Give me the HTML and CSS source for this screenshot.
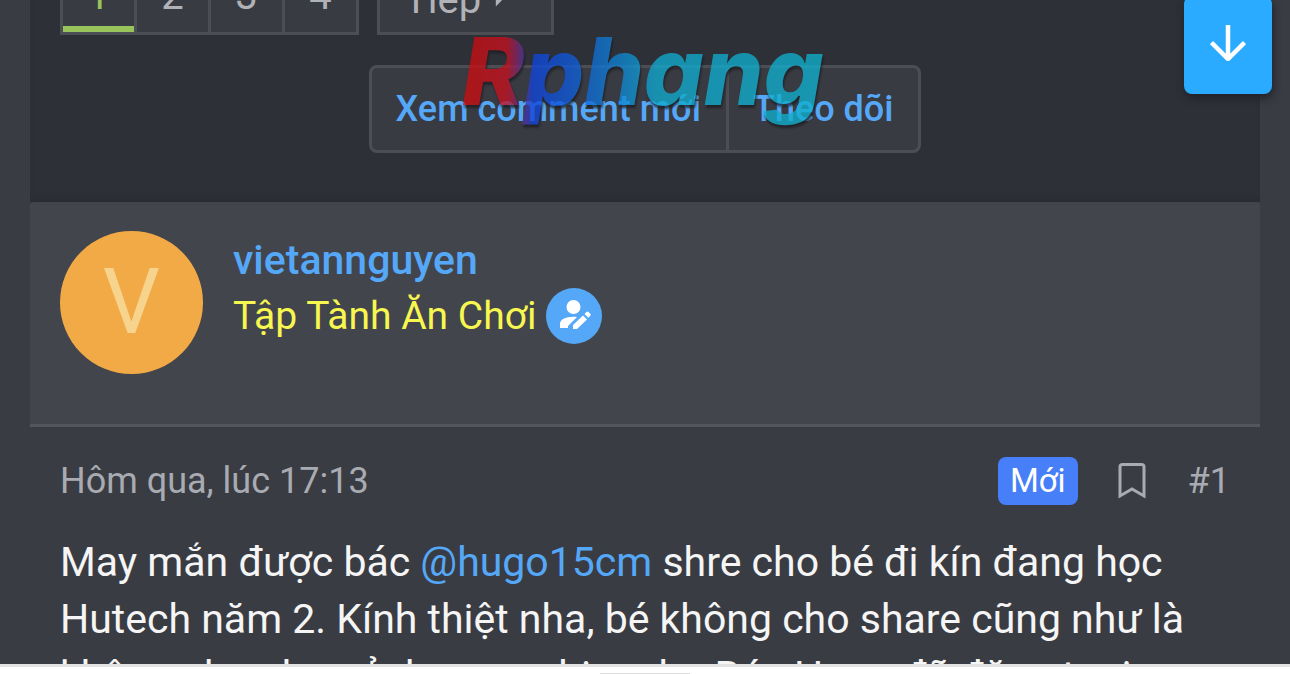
FILE: index.html
```html
<!DOCTYPE html>
<html lang="vi">
<head>
<meta charset="utf-8">
<meta name="viewport" content="width=device-width, initial-scale=1">
<title>Rphang</title>
<link rel="stylesheet" href="styles.css">
</head>
<body>
<div class="screen">
  <main class="forum">
    <header class="toolbar">
      <nav class="pager" aria-label="Trang">
        <div class="pages">
          <a class="page page-current" href="#p1" aria-current="page">1</a>
          <a class="page" href="#p2">2</a>
          <a class="page" href="#p3">3</a>
          <a class="page" href="#p4">4</a>
        </div>
        <a class="next" href="#p2">Tiếp <svg class="caret" viewBox="0 0 10 16" aria-hidden="true"><path d="M1 0 9 8 1 16Z"/></svg></a>
      </nav>
      <div class="actions">
        <a class="action" href="#new">Xem comment mới</a>
        <a class="action" href="#watch">Theo dõi</a>
        <svg class="brand" viewBox="0 0 376 110" role="img" aria-label="Rphang">
          <defs>
            <linearGradient id="ink" gradientUnits="userSpaceOnUse" x1="0" y1="0" x2="376" y2="0">
              <stop offset="0" stop-color="#cc0c0c"/>
              <stop offset=".12" stop-color="#c41220"/>
              <stop offset=".19" stop-color="#0f45dc"/>
              <stop offset=".28" stop-color="#1058d8"/>
              <stop offset=".42" stop-color="#1084d2"/>
              <stop offset=".52" stop-color="#10aace"/>
              <stop offset="1" stop-color="#10b0ce"/>
            </linearGradient>
          </defs>
          <text class="brand-text" x="0" y="73" fill="url(#ink)">Rphang</text>
        </svg>
      </div>
    </header>
    <article class="post">
      <section class="author">
        <a class="avatar" href="#user">V</a>
        <div class="identity">
          <a class="username" href="#user">vietannguyen</a>
          <div class="rank">
            <span>Tập Tành Ăn Chơi</span>
            <svg class="role" viewBox="0 0 56 56" role="img" aria-label="Người viết bài">
              <circle cx="28" cy="28" r="28" fill="#55a8f7"/>
              <circle cx="27.500" cy="19" r="7" fill="#fff"/>
              <path d="M14 40v-4c0-5 7-8 17-7l-9 9v2Z" fill="#fff"/>
              <path d="M27 41v-4l10-9.500 4 4L31 41ZM38.500 26l2-2q1-1 2 0l1.800 1.800q1 1 0 2l-2 2Z" fill="#fff"/>
            </svg>
          </div>
        </div>
      </section>
      <div class="meta">
        <time>Hôm qua, lúc 17:13</time>
        <div class="meta-tools">
          <span class="badge">Mới</span>
          <button class="bookmark" type="button" aria-label="Đánh dấu">
            <svg viewBox="0 0 28 36" aria-hidden="true"><path d="M2 33V4q0-2.500 2.500-2.500h19q2.500 0 2.500 2.500v29l-12-7Z" fill="none" stroke="#a9abb2" stroke-width="3"/></svg>
          </button>
          <a class="number" href="#post-1">#1</a>
        </div>
      </div>
      <p class="body">May mắn được bác <a class="mention" href="#hugo15cm">@hugo15cm</a> shre cho bé đi kín đang học<br>Hutech năm 2. Kính thiệt nha, bé không cho share cũng như là<br>không cho chụp ảnh xong chim cho Bác Hugo đã đăng topic</p>
    </article>
    <button class="jump" type="button" aria-label="Xuống cuối">
      <svg viewBox="0 0 36 36" aria-hidden="true"><path d="M18 0v33M1.500 17.500 18 34l16.500-16.500" fill="none" stroke="#fff" stroke-width="4.500"/></svg>
    </button>
  </main>
  <footer class="sheet"><span class="handle"></span></footer>
</div>
</body>
</html>
```
FILE: styles.css
```css
* { box-sizing: border-box; }
body { margin: 0; background: #fff; font-family: Roboto, "Noto Sans", sans-serif; }
a { color: inherit; text-decoration: none; }
.screen { display: flex; flex-direction: column; height: 100vh; }
.forum { position: relative; flex: 1; min-height: 0; overflow: hidden; padding: 0 30px; background: #3a3c43; }
.toolbar { height: 202px; background: #2d3037; box-shadow: inset 0 -6px 6px -4px #292b30; }
.pager { display: flex; gap: 18px; height: 35px; padding-left: 30px; align-items: flex-end; font-size: 40px; color: #b0b2b8; }
.pages { display: flex; border: 3px solid #4c4e54; background: #393b42; }
.page { display: flex; align-items: flex-end; justify-content: center; width: 74px; height: 64px; padding-bottom: 14px; border-right: 3px solid #4c4e54; line-height: 44px; }
.page:last-child { width: 71px; border-right: 0; }
.page-current { color: #99c45c; box-shadow: inset 0 -6px #99c45c; }
.next { display: flex; align-items: center; gap: 14px; height: 70px; padding: 0 48px 0 24px; border: 3px solid #4c4e54; background: #393b42; line-height: 44px; }
.caret { width: 8px; height: 14px; fill: currentColor; }
.actions { position: relative; display: flex; width: max-content; height: 88px; margin: 30px auto 0; border: 3px solid #4c4e54; border-radius: 8px; background: #393b42; color: #55a8f7; font-size: 36px; font-weight: 500; line-height: 82px; }
.action { padding: 0 25px 0 24px; }
.action + .action { border-left: 3px solid #4c4e54; }
.brand { position: absolute; left: 90px; top: -36px; width: 376px; height: 110px; overflow: visible; opacity: .78; pointer-events: none; filter: drop-shadow(1px 3px 1px #1b1d22); }
.brand-text { font: italic 800 94px Inter, sans-serif; }
.author { display: flex; gap: 30px; height: 225px; padding: 29px 30px; background: #43454d; border-bottom: 3px solid #54565d; border-radius: 4px 4px 0 0; }
.avatar { display: grid; place-items: center; flex: none; width: 143px; height: 143px; border-radius: 50%; background: #f2aa46; color: #f7d48d; font-size: 90px; font-weight: 400; line-height: 100px; }
.identity { padding-top: 1px; }
.username { display: block; color: #55a8f7; font-size: 41px; font-weight: 500; line-height: 56px; }
.rank { display: flex; align-items: center; gap: 10px; color: #f7f74f; font-size: 39px; line-height: 56px; }
.role { width: 56px; height: 56px; }
.meta { display: flex; align-items: center; justify-content: space-between; height: 107px; padding: 0 30px; color: #a9abb2; font-size: 36px; }
.meta-tools { display: flex; align-items: center; }
.badge { padding: 0 12px; border-radius: 8px; background: #467ff7; color: #fff; font-size: 33px; line-height: 48px; }
.bookmark { display: flex; margin: 0 42px 0 40px; padding: 0; border: 0; background: none; }
.bookmark svg { width: 28px; height: 36px; }
.body { margin: 0; padding: 0 30px; color: #f5f5f5; font-size: 41px; line-height: 57px; white-space: nowrap; }
.mention { color: #55a8f7; }
.jump { position: absolute; top: -4px; right: 18px; display: grid; place-items: center; width: 88px; height: 98px; padding: 0 0 4px; border: 0; border-radius: 8px; background: #2aabff; box-shadow: 1px 4px 8px #202228; }
.jump svg { width: 36px; height: 36px; }
.sheet { display: flex; justify-content: center; align-items: flex-end; flex: none; height: 10px; border-top: 3px solid #e2e2e2; background: #fff; }
.handle { width: 90px; height: 1px; background: #ddd; }
```
